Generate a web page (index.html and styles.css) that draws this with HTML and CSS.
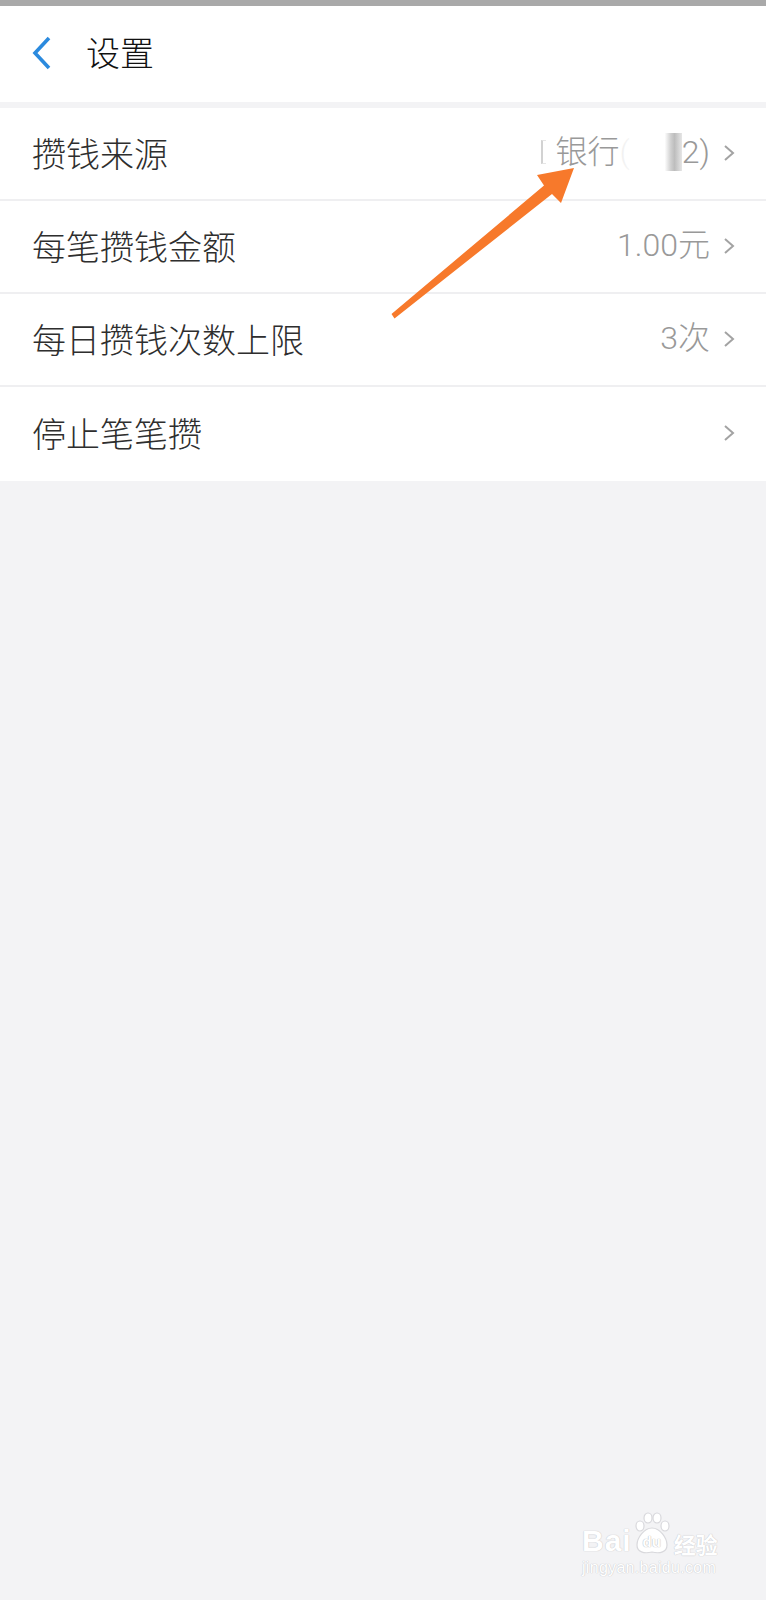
FILE: index.html
```html
<!DOCTYPE html>
<html lang="zh-CN">
<head>
<meta charset="utf-8">
<title>设置</title>
<link rel="stylesheet" href="styles.css">
</head>
<body>
<div class="statusbar"></div>
<header class="header">
  <svg class="back" width="24" height="36" viewBox="0 0 24 36"><path d="M19 3 L5 18 L19 33" fill="none" stroke="#2b8ade" stroke-width="3.6" stroke-linecap="butt" stroke-linejoin="miter"/></svg>
  <h1 class="title">设置</h1>
</header>
<ul class="list">
  <li class="row">
    <span class="label">攒钱来源</span>
    <span class="value"><span class="cut"></span>银行(<span class="mask"></span>2)</span>
    <svg class="chev" width="14" height="18" viewBox="0 0 14 18"><path d="M3 2 L11 9 L3 16" fill="none" stroke="#a3a3a3" stroke-width="2"/></svg>
  </li>
  <li class="row">
    <span class="label">每笔攒钱金额</span>
    <span class="value">1.00元</span>
    <svg class="chev" width="14" height="18" viewBox="0 0 14 18"><path d="M3 2 L11 9 L3 16" fill="none" stroke="#a3a3a3" stroke-width="2"/></svg>
  </li>
  <li class="row">
    <span class="label">每日攒钱次数上限</span>
    <span class="value">3次</span>
    <svg class="chev" width="14" height="18" viewBox="0 0 14 18"><path d="M3 2 L11 9 L3 16" fill="none" stroke="#a3a3a3" stroke-width="2"/></svg>
  </li>
  <li class="row">
    <span class="label">停止笔笔攒</span>
    <span class="value"></span>
    <svg class="chev" width="14" height="18" viewBox="0 0 14 18"><path d="M3 2 L11 9 L3 16" fill="none" stroke="#a3a3a3" stroke-width="2"/></svg>
  </li>
</ul>

<svg class="arrow" width="766" height="400" viewBox="0 0 766 400">
  <polygon points="391.5,314 544,185.5 537,175 574,168 561,203 552,194 394.5,318.5" fill="#f7792b"/>
</svg>

<div class="watermark">
  <div class="wm-top">
    <span class="wm-bai">Bai</span>
    <span class="wm-paw">
      <svg width="36" height="44" viewBox="0 0 36 44">
        <g fill="#fff" stroke="#d8d8dc" stroke-width="1.2">
          <ellipse cx="6" cy="14" rx="4" ry="5"/>
          <ellipse cx="14" cy="6" rx="4" ry="5"/>
          <ellipse cx="23" cy="6" rx="4" ry="5"/>
          <ellipse cx="31" cy="14" rx="4" ry="5"/>
          <path d="M18 16 C10 16 3 26 3 33 C3 40 10 42 18 40 C26 42 33 40 33 33 C33 26 26 16 18 16 Z"/>
        </g>
      </svg>
      <span class="wm-du">du</span>
    </span>
    <span class="wm-jy">经验</span>
  </div>
  <div class="wm-url">jingyan.baidu.com</div>
</div>
</body>
</html>
```
FILE: styles.css
```css
* { box-sizing: border-box; }
html, body {
  margin: 0;
  padding: 0;
}
body {
  width: 766px;
  min-height: 1600px;
  background: #f3f3f5;
  font-family: "Noto Sans CJK SC", "Noto Sans", sans-serif;
  position: relative;
  overflow: hidden;
}
.statusbar {
  height: 6px;
  background: #a9a9a9;
}
.header {
  height: 96px;
  background: #fff;
  display: flex;
  align-items: center;
  padding-left: 30px;
  margin-bottom: 6px;
}
.back {
  display: block;
  margin-top: -2px;
}
.title {
  margin: -4px 0 0 32px;
  font-size: 34px;
  font-weight: 300;
  color: #111;
  line-height: 1;
}
.list {
  list-style: none;
  margin: 0;
  padding: 0;
  background: #fff;
}
.row {
  height: 93px;
  display: flex;
  align-items: center;
  padding: 0 30px 0 32px;
  border-bottom: 2px solid #efeff1;
}
.row:last-child { border-bottom: none; height: 94px; }
.label {
  flex: 1;
  font-size: 34px;
  font-weight: 300;
  color: #2e2e2e;
  line-height: 1;
  margin-top: -2px;
}
.value {
  font-family: "Roboto", "Noto Sans CJK SC", sans-serif;
  font-size: 32px;
  font-weight: 300;
  color: #999;
  line-height: 1;
  display: flex;
  align-items: center;
  margin-top: -4px;
}
.chev {
  display: block;
  margin-left: 12px;
  margin-top: -2px;
}
.cut {
  display: inline-block;
  width: 5px;
  height: 24px;
  border-left: 2px solid #c8c8c8;
  border-top: 1px solid #e0e0e0;
  border-bottom: 1px solid #e0e0e0;
  margin-right: 10px;
  opacity: 0.8;
}
.mask {
  display: inline-block;
  width: 62px;
  height: 38px;
  margin-left: -10px;
  background: linear-gradient(to right, rgba(255,255,255,0.85) 0%, #fff 40%, #fff 72%, #cfcfcf 82%, #bdbdbd 88%, #e6e6e6 100%);
}
.arrow {
  position: absolute;
  left: 0;
  top: 0;
  pointer-events: none;
}
.watermark {
  position: absolute;
  left: 582px;
  top: 1512px;
  width: 150px;
  color: #fff;
  font-family: "Liberation Sans", "Noto Sans CJK SC", sans-serif;
}
.wm-top {
  display: flex;
  align-items: flex-end;
}
.wm-bai {
  font-size: 30px;
  font-weight: 700;
  line-height: 1;
  color: #fff;
  text-shadow: 0 0 1px #c8c8cc, 0 0 1px #c8c8cc;
  letter-spacing: 1px;
}
.wm-paw {
  position: relative;
  width: 36px;
  height: 44px;
  margin-left: 2px;
}
.wm-paw svg { display: block; }
.wm-du {
  position: absolute;
  left: 0;
  right: 0;
  bottom: 6px;
  text-align: center;
  font-size: 15px;
  font-weight: 700;
  color: #fff;
  text-shadow: 0 0 1px #bbb, 0 0 1px #bbb;
}
.wm-jy {
  font-family: "Noto Sans CJK SC", sans-serif;
  font-size: 22px;
  font-weight: 700;
  line-height: 1;
  margin-left: 4px;
  color: #fff;
  text-shadow: 0 0 1px #c8c8cc, 0 0 1px #c8c8cc;
  padding-bottom: 2px;
}
.wm-url {
  font-size: 16px;
  margin-top: 3px;
  color: #fff;
  text-shadow: 0 0 1px #c8c8cc, 0 0 1px #c8c8cc;
  letter-spacing: 0.3px;
}
```
